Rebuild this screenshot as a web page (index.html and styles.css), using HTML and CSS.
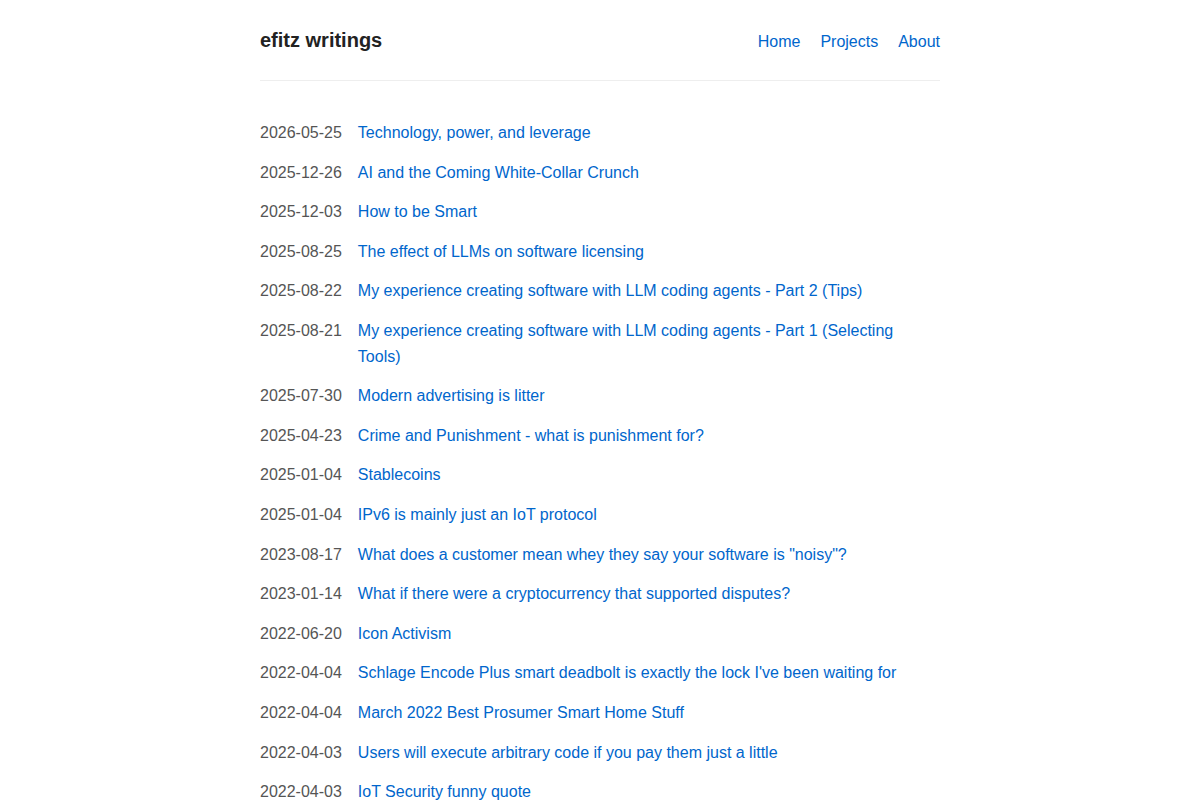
FILE: index.html
```html
<!DOCTYPE html>
<html lang="en">
<head>
  <meta charset="UTF-8" />
  <meta name="viewport" content="width=device-width, initial-scale=1.0" />
  <title>efitz writings</title>
  <link rel="stylesheet" href="styles.css">
</head>
<body>
  <div class="wrapper">
    <header class="site-header">
      <a class="site-title" href="#">efitz writings</a>
      <nav class="site-nav">
        <a href="#">Home</a>
        <a href="#">Projects</a>
        <a href="#">About</a>
      </nav>
    </header>

    <ul class="post-list">
      <li><span class="post-date">2026-05-25</span><a href="#">Technology, power, and leverage</a></li>
      <li><span class="post-date">2025-12-26</span><a href="#">AI and the Coming White-Collar Crunch</a></li>
      <li><span class="post-date">2025-12-03</span><a href="#">How to be Smart</a></li>
      <li><span class="post-date">2025-08-25</span><a href="#">The effect of LLMs on software licensing</a></li>
      <li><span class="post-date">2025-08-22</span><a href="#">My experience creating software with LLM coding agents - Part 2 (Tips)</a></li>
      <li><span class="post-date">2025-08-21</span><a href="#">My experience creating software with LLM coding agents - Part 1 (Selecting Tools)</a></li>
      <li><span class="post-date">2025-07-30</span><a href="#">Modern advertising is litter</a></li>
      <li><span class="post-date">2025-04-23</span><a href="#">Crime and Punishment - what is punishment for?</a></li>
      <li><span class="post-date">2025-01-04</span><a href="#">Stablecoins</a></li>
      <li><span class="post-date">2025-01-04</span><a href="#">IPv6 is mainly just an IoT protocol</a></li>
      <li><span class="post-date">2023-08-17</span><a href="#">What does a customer mean whey they say your software is "noisy"?</a></li>
      <li><span class="post-date">2023-01-14</span><a href="#">What if there were a cryptocurrency that supported disputes?</a></li>
      <li><span class="post-date">2022-06-20</span><a href="#">Icon Activism</a></li>
      <li><span class="post-date">2022-04-04</span><a href="#">Schlage Encode Plus smart deadbolt is exactly the lock I've been waiting for</a></li>
      <li><span class="post-date">2022-04-04</span><a href="#">March 2022 Best Prosumer Smart Home Stuff</a></li>
      <li><span class="post-date">2022-04-03</span><a href="#">Users will execute arbitrary code if you pay them just a little</a></li>
      <li><span class="post-date">2022-04-03</span><a href="#">IoT Security funny quote</a></li>
    </ul>
  </div>
</body>
</html>
```

FILE: styles.css
```css
* { box-sizing: border-box; margin: 0; padding: 0; }
body {
  font-family: "Liberation Sans", Arial, sans-serif;
  font-size: 16px; line-height: 1.6; color: #222; background: #fff;
}
a { color: #0066cc; text-decoration: none; }

.wrapper { max-width: 680px; margin: 0 auto; }

.site-header {
  display: flex; align-items: center; justify-content: space-between;
  padding: 24px 0; border-bottom: 1px solid #eee; margin-bottom: 39px;
}
.site-title { font-size: 20px; font-weight: 700; color: #222; }
.site-nav { display: flex; gap: 20px; margin-top: 4px; }

.post-list { list-style: none; }
.post-list li { display: flex; gap: 16px; margin-bottom: 14px; }
.post-date { flex-shrink: 0; color: #555; }
```
